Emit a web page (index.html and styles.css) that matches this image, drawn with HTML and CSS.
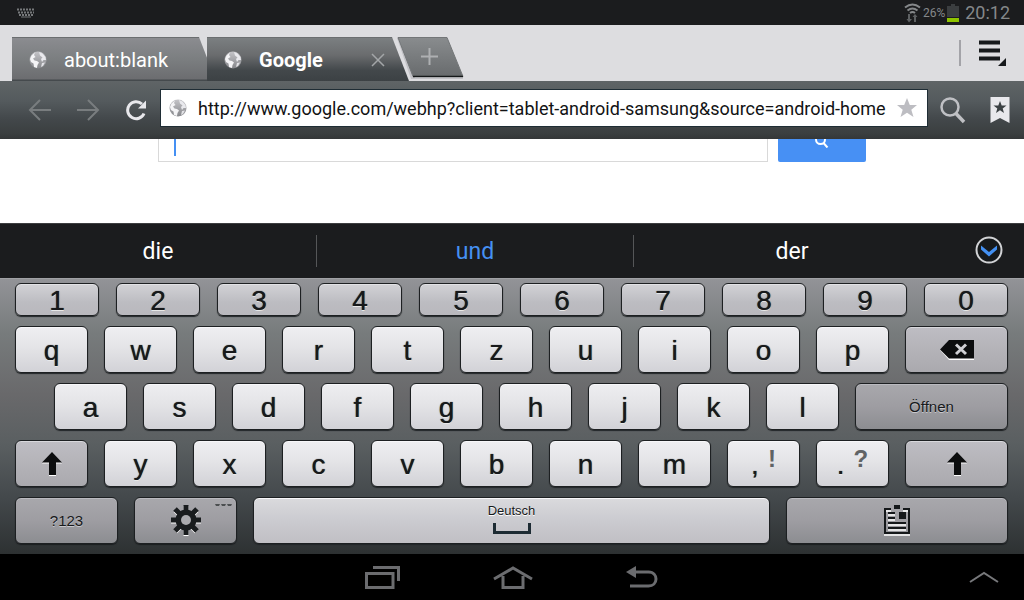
FILE: index.html
```html
<!DOCTYPE html>
<html lang="de">
<head>
<meta charset="utf-8">
<meta name="viewport" content="width=device-width, initial-scale=1">
<title>Google</title>
<link rel="stylesheet" href="styles.css">
</head>
<body>
<svg class="defs" width="0" height="0" aria-hidden="true">
  <defs>
    <linearGradient id="globe-fill" x1="0" y1="0" x2="0" y2="1">
      <stop offset="0" stop-color="#c4c4c8"/><stop offset="1" stop-color="#85868a"/>
    </linearGradient>
    <symbol id="globe" viewBox="0 0 18 18">
      <circle cx="9" cy="9" r="8.500" fill="url(#globe-fill)"/>
      <path d="M1 8 2.500 4.500 6 1.500 5 4 6.500 6 4 7.500 5.500 9.500 8 10 10 11.500 8.500 14 8 17 5 16 4.500 12.500 2 11Z" fill="#f4f4f6"/>
      <path d="M10 1 13.500 2.500 16.500 6 17 9 14.500 9 13 11 12 8 13.500 6.500 11 4.500Z" fill="#e9e9ed"/>
      <path d="M13 12 16 11.500 14 15 12 16Z" fill="#e2e2e6"/>
    </symbol>
    <symbol id="shift" viewBox="0 0 20 26">
      <path d="M10 2 20 12.500H14V25H7V12.500H0Z" fill="#fff"/>
      <path d="M10 1 20 11.500H14V24H7V11.500H0Z" fill="#0c0d0e"/>
    </symbol>
  </defs>
</svg>

<header class="status">
  <svg class="status-keyboard" width="18" height="10" viewBox="0 0 18 10" role="img" aria-label="Tastatur">
    <path d="M0 1.500H18M1 4.500H17M2 7H16" stroke="#77797b" stroke-width="2" stroke-dasharray="2 1"/>
    <path d="M4 9H14" stroke="#77797b" stroke-width="1"/>
  </svg>
  <div class="status-right">
    <svg width="17" height="20" viewBox="0 0 17 20" role="img" aria-label="WLAN">
      <g fill="none" stroke="#85888a" stroke-width="2">
        <path d="M1 4.500Q8.500-1.500 16 4.500"/><path d="M3.500 7.500Q8.500 3.500 13.500 7.500"/><path d="M6 10Q8.500 8 11 10"/>
      </g>
      <path d="M6 11V16H8L5 19.500 2.500 16H4V11ZM10 19V14H8.500L11 11 13.500 14H12V19Z" fill="#5e6163"/>
    </svg>
    <span class="percent">26%</span>
    <svg width="12" height="18" viewBox="0 0 12 18" role="img" aria-label="Akku">
      <path d="M4 0H8V2H12V13H0V2H4Z" fill="#3b3e40"/><path d="M0 14H12V18H0Z" fill="#8fc400"/>
    </svg>
    <time class="clock">20:12</time>
  </div>
</header>

<nav class="tabs" aria-label="Tabs">
  <button class="tab" type="button">
    <svg width="18" height="18" aria-hidden="true"><use href="#globe"/></svg><span>about:blank</span>
  </button>
  <div class="tab tab-active">
    <svg width="18" height="18" aria-hidden="true"><use href="#globe"/></svg><span class="tab-title">Google</span>
    <button class="tab-close" type="button" aria-label="Tab schließen">
      <svg width="14" height="14" viewBox="0 0 14 14"><path d="M1 1 13 13M13 1 1 13" stroke="#a3a6a8" stroke-width="1.500"/></svg>
    </button>
  </div>
  <button class="tab-new" type="button" aria-label="Neuer Tab">
    <svg width="68" height="42" viewBox="0 0 68 42">
      <defs><linearGradient id="new-fill" x1="0" y1="0" x2="0" y2="1"><stop offset="0" stop-color="#898c8e"/><stop offset="1" stop-color="#686b6d"/></linearGradient></defs>
      <path d="M0 1H3L18 41H66V42H14Z" fill="#c2c2c6"/>
      <path d="M1 .5H50L66 39.500H16Z" fill="url(#new-fill)" stroke="#737678"/>
      <path d="M16 39.500H66" stroke="#151819" stroke-width="1.500"/>
      <path d="M32.500 11V28M24 19.500H41" stroke="#aeb0b2" stroke-width="2"/>
    </svg>
  </button>
  <button class="menu" type="button" aria-label="Menü">
    <svg width="28" height="27" viewBox="0 0 28 27"><path d="M0 2.500H21M0 10.500H21M0 18.500H21" stroke="#16191b" stroke-width="4"/><path d="M27 18V26H19Z" fill="#16191b"/></svg>
  </button>
</nav>

<div class="toolbar">
  <button class="icon" type="button" aria-label="Zurück">
    <svg width="24" height="22" viewBox="0 0 24 22"><path d="M12 1 2 11 12 21M2 11H23" fill="none" stroke="#797d7f" stroke-width="2"/></svg>
  </button>
  <button class="icon" type="button" aria-label="Vorwärts">
    <svg width="24" height="22" viewBox="0 0 24 22"><path d="M12 1 22 11 12 21M22 11H1" fill="none" stroke="#797d7f" stroke-width="2"/></svg>
  </button>
  <button class="icon" type="button" aria-label="Neu laden">
    <svg width="24" height="22" viewBox="-2 0 24 22"><path d="M16 5A8.500 8.500 0 1 0 18 14.500" fill="none" stroke="#e8e8ec" stroke-width="3"/><path d="M20 1.500V9.500H12Z" fill="#e8e8ec"/></svg>
  </button>
  <form class="address">
    <svg width="18" height="18" aria-hidden="true"><use href="#globe"/></svg>
    <input class="url" type="text" aria-label="Adresse" value="http://www.google.com/webhp?client=tablet-android-samsung&amp;source=android-home">
    <button class="star" type="button" aria-label="Favorit">
      <svg width="20" height="20" viewBox="0 0 20 20"><path d="M10 0 12.800 7H20L14.300 11.700 16.500 19 10 14.800 3.500 19 5.700 11.700 0 7H7.200Z" fill="#bdbdc2"/></svg>
    </button>
  </form>
  <button class="icon find" type="button" aria-label="Suchen">
    <svg width="26" height="27" viewBox="0 0 26 27"><circle cx="10" cy="10" r="8.500" fill="none" stroke="#bfc0c4" stroke-width="2.500"/><path d="M15.500 16 24 25" stroke="#bfc0c4" stroke-width="3.500"/></svg>
  </button>
  <button class="icon" type="button" aria-label="Lesezeichen">
    <svg width="20" height="28" viewBox="0 0 20 28"><path d="M.5 1H19.500V27L10 22 .5 27Z" fill="#e8e8ec"/><path d="M10 5 11.700 9.500H16.500L12.700 12.500 14 17 10 14.300 6 17 7.300 12.500 3.500 9.500H8.300Z" fill="#3b4144"/></svg>
  </button>
</div>

<main class="page">
  <form class="search">
    <input class="search-box" type="text" aria-label="Google-Suche">
    <button class="search-go" type="button" aria-label="Google-Suche starten">
      <svg width="14" height="16" viewBox="0 0 14 16"><circle cx="5.500" cy="7.500" r="4.500" fill="none" stroke="#fff" stroke-width="2"/><path d="M8.500 11 12.500 15.500" stroke="#fff" stroke-width="2"/></svg>
    </button>
  </form>
</main>

<section class="suggestions" aria-label="Vorschläge">
  <button class="word" type="button">die</button>
  <button class="word word-best" type="button">und</button>
  <button class="word" type="button">der</button>
  <button class="expand" type="button" aria-label="Mehr">
    <svg width="28" height="28" viewBox="0 0 28 28"><circle cx="14" cy="14" r="12.500" fill="#16191b" stroke="#d2d3d6" stroke-width="2"/><path d="M6 9.500 14 16 22 9.500V13.500L14 20.500 6 13.500Z" fill="#4390f2"/></svg>
  </button>
</section>

<section class="keyboard" aria-label="Bildschirmtastatur">
  <div class="row row-numbers">
    <button class="key">1</button><button class="key">2</button><button class="key">3</button><button class="key">4</button><button class="key">5</button><button class="key">6</button><button class="key">7</button><button class="key">8</button><button class="key">9</button><button class="key">0</button>
  </div>
  <div class="row">
    <button class="key">q</button><button class="key">w</button><button class="key">e</button><button class="key">r</button><button class="key">t</button><button class="key">z</button><button class="key">u</button><button class="key">i</button><button class="key">o</button><button class="key">p</button>
    <button class="key key-mid key-wide" aria-label="Löschen">
      <svg width="34" height="20" viewBox="0 0 34 20"><path d="M0 10 10 1H34V20H9Z" fill="#fff"/><path d="M0 9.500 9 0H34V18.500H9Z" fill="#0c0d0e"/><path d="M16 4.500 26 14M26 4.500 16 14" stroke="#cfcfd3" stroke-width="3"/></svg>
    </button>
  </div>
  <div class="row row-home">
    <button class="key">a</button><button class="key">s</button><button class="key">d</button><button class="key">f</button><button class="key">g</button><button class="key">h</button><button class="key">j</button><button class="key">k</button><button class="key">l</button>
    <button class="key key-dark key-open">Öffnen</button>
  </div>
  <div class="row">
    <button class="key key-mid" aria-label="Umschalt links"><svg width="20" height="26"><use href="#shift"/></svg></button>
    <button class="key">y</button><button class="key">x</button><button class="key">c</button><button class="key">v</button><button class="key">b</button><button class="key">n</button><button class="key">m</button>
    <button class="key key-pair"><span>,</span><span class="alt">!</span></button>
    <button class="key key-pair"><span>.</span><span class="alt">?</span></button>
    <button class="key key-mid key-wide" aria-label="Umschalt rechts"><svg width="20" height="26"><use href="#shift"/></svg></button>
  </div>
  <div class="row">
    <button class="key key-dark key-wide">?123</button>
    <button class="key key-dark key-wide key-gear" aria-label="Einstellungen">
      <svg width="30" height="31" viewBox="-15 -15 30 31">
        <g stroke="#fff" stroke-width="5" transform="translate(0 1)"><path d="M0-15V15M-15 0H15M-10.500-10.500 10.500 10.500M10.500-10.500-10.500 10.500"/></g>
        <g stroke="#191c1e" stroke-width="5"><path d="M0-15V15M-15 0H15M-11-11 11 11M11-11-11 11"/></g>
        <circle r="10.500" fill="#191c1e"/><circle r="5" fill="#aaaaae"/>
      </svg>
      <svg class="more" width="18" height="4" viewBox="0 0 18 4"><path d="M0 1H5L4 3H1ZM6 1H11L10 3H7ZM12 1H17L16 3H13Z" fill="#4c4f51"/></svg>
    </button>
    <button class="key key-space">
      <span>Deutsch</span>
      <svg width="38" height="11" viewBox="0 0 38 11"><path d="M1.500 0V9.500H36.500V0" fill="none" stroke="#1d2b33" stroke-width="3"/></svg>
    </button>
    <button class="key key-dark key-clip" aria-label="Zwischenablage">
      <svg width="26" height="31" viewBox="0 0 26 31">
        <path d="M0 30H26M4 10H11M4 15H11M4 20H22M4 25H22M2 6H7M19 6H24" stroke="#fff" stroke-width="1.500"/>
        <path d="M7 4H1V28H25V4H19" fill="none" stroke="#15181a" stroke-width="2"/>
        <path d="M10 0H16V4H10Z" fill="#15181a"/>
        <path d="M4 8H11M4 13H11M4 18H22M4 23H22" stroke="#15181a" stroke-width="2"/>
        <path d="M15 7H22V14H15Z" fill="#15181a"/>
      </svg>
    </button>
  </div>
</section>

<footer class="system">
  <div class="system-main">
    <button class="sys" type="button" aria-label="Letzte Apps">
      <svg width="36" height="24" viewBox="0 0 36 24"><path d="M2.500 8.500H29V22.500H2.500ZM9 2.500H34.500V16" fill="none" stroke="#6b6c6f" stroke-width="3"/></svg>
    </button>
    <button class="sys" type="button" aria-label="Startseite">
      <svg width="40" height="24" viewBox="0 0 40 24"><path d="M1 14 20 3 39 14M10 11V22.500H30V11" fill="none" stroke="#6b6c6f" stroke-width="3"/></svg>
    </button>
    <button class="sys" type="button" aria-label="Zurück (System)">
      <svg width="32" height="22" viewBox="0 0 32 22"><path d="M8 6H22.500C28 6 30 10 30 13C30 17 27 20 22.500 20H4" fill="none" stroke="#6b6c6f" stroke-width="3"/><path d="M0 6 10 0V12Z" fill="#6b6c6f"/></svg>
    </button>
  </div>
  <button class="sys-up" type="button" aria-label="Leiste öffnen">
    <svg width="30" height="13" viewBox="0 0 30 13"><path d="M1 11 15 2 29 11" fill="none" stroke="#77787b" stroke-width="2"/></svg>
  </button>
</footer>
</body>
</html>
```

FILE: styles.css
```css
* {
  box-sizing: border-box;
}

body {
  display: flex;
  flex-direction: column;
  min-height: 100vh;
  margin: 0;
  background: #fff;
  font-family: Roboto, "Noto Sans", sans-serif;
}

button,
input {
  margin: 0;
  padding: 0;
  border: 0;
  background: none;
  color: inherit;
  font: inherit;
}

svg {
  display: block;
  flex: none;
}

.defs {
  position: absolute;
}

/* Status bar */
.status {
  display: flex;
  align-items: center;
  justify-content: space-between;
  height: 25px;
  padding: 0 14px 0 17px;
  background: #1b1c1e;
  color: #85888a;
}

.status-right {
  display: flex;
  align-items: center;
  gap: 2px;
}

.percent {
  font-size: 12px;
}

.clock {
  margin-left: 4px;
  font-size: 18px;
}

/* Tabs */
.tabs {
  display: flex;
  align-items: flex-end;
  height: 56px;
  padding: 0 17px 0 12px;
  background: #dddde0;
}

.tab {
  display: flex;
  align-items: center;
  gap: 17px;
  width: 204px;
  height: 44px;
  padding: 0 18px 0 17px;
  border-top: 1px solid #6b6e70;
  background: linear-gradient(#8b8c90, #7b7e80 50%, #6c6d70 95%, #454a4d 98%);
  clip-path: polygon(0 0, calc(100% - 17px) 0, 100% 100%, 0 100%);
  color: #fff;
  font-size: 20px;
}

.tab-active {
  margin-left: -9px;
  width: 202px;
  background: linear-gradient(#7b7f81, #6a6c6e 40%, #43484b 75%, #3c4144);
  font-weight: 700;
}

.tab-title {
  flex: 1;
}

.tab-close {
  padding: 6px;
}

.tab-new {
  align-self: flex-end;
  margin: 0 0 2px -12px;
}

.menu {
  display: flex;
  align-items: center;
  align-self: center;
  height: 26px;
  margin-left: auto;
  padding-left: 18px;
  border-left: 2px solid #a3a3a8;
}

/* Toolbar */
.toolbar {
  display: flex;
  align-items: center;
  height: 58px;
  padding: 0 14px 0 28px;
  gap: 24px;
  background: linear-gradient(#5f6466, #545a5d 35%, #43484b 65%, #3b3f40 90%, #343738);
}

.address {
  display: flex;
  flex: 1;
  align-items: center;
  height: 38px;
  margin: 0 -12px 4px;
  padding: 0 10px 0 8px;
  border: 1px solid #1f2d35;
  background: #fff;
}

.url {
  flex: 1;
  min-width: 0;
  height: 34px;
  margin: 0 4px 0 11px;
  color: #121314;
  font-size: 18px;
}

/* Web page, scrolled so that the search form starts under the toolbar */
.page {
  flex: 1;
  min-height: 84px;
  overflow: hidden;
}

.search {
  display: flex;
  gap: 10px;
  max-width: 708px;
  margin: -22px auto 0;
}

.search-box {
  flex: 1;
  height: 45px;
  border: 1px solid #d9d9d9;
  background: linear-gradient(#4590f3, #4590f3) 15px 14px / 2px 24px no-repeat;
}

.search-go {
  display: grid;
  place-items: center;
  width: 88px;
  height: 45px;
  border-radius: 2px;
  background: #4790f4;
}

/* Suggestions */
.suggestions {
  display: flex;
  align-items: center;
  height: 55px;
  border-top: 1px solid #3d3e40;
  background: #1b1c1e;
  color: #fff;
  font-size: 23px;
}

.word {
  flex: 1;
  height: 32px;
  border-right: 1px solid #555658;
}

.word:nth-child(3) {
  border-color: transparent;
}

.word-best {
  color: #4690f2;
}

.expand {
  display: grid;
  place-items: center;
  width: 73px;
  padding: 0 0 2px 3px;
}

/* Keyboard */
.keyboard {
  display: flex;
  flex-direction: column;
  gap: 10px;
  padding: 4px 16px 10px 15px;
  border-top: 1px solid #a0a1a5;
  background: linear-gradient(#929397, #777b7c 20%, #69696b 42%, #5a5f61 60%, #43484b 80%, #2d3132);
  font-family: "Liberation Sans", Arial, sans-serif;
}

.row {
  display: flex;
  gap: 16px;
  height: 47px;
}

.row-numbers {
  gap: 17px;
  height: 33px;
}

.row-home {
  padding-left: 39px;
}

.key {
  display: flex;
  flex: 73 73 73px;
  align-items: center;
  justify-content: center;
  min-width: 0;
  padding-top: 3px;
  border: 1px solid #1d2022;
  border-radius: 6px;
  background: linear-gradient(#eeeef1, #e4e4e7 45%, #d2d2d7);
  box-shadow: inset 0 1px #f7f7f9, 0 1px 1px #222628;
  color: #17191b;
  font-size: 28px;
  line-height: 32px;
  text-shadow: 0 0 1px #17191b, 0 1px #fff;
}

.row-numbers .key {
  background: linear-gradient(#d2d2d6, #bcbcc1 60%, #b9b8bd);
  box-shadow: inset 0 1px #e2e2e5, 0 1px 1px #222628;
}

.key-mid,
.key-dark {
  padding: 0;
  background: linear-gradient(#bebdc3, #b2b1b6 60%, #aaa9ae);
  box-shadow: inset 0 1px #d8d8dc, 0 1px 1px #222628;
}

.key-dark {
  background: linear-gradient(#a8a8ac, #9e9da2 50%, #8c8d91);
  box-shadow: inset 0 1px #bbbbc0, 0 1px 1px #1b1e20;
  font-size: 15px;
  text-shadow: 0 1px #c8c8cc;
}

.key-wide {
  flex: 103 103 103px;
}

.key-open {
  flex: 153 153 153px;
}

.key-pair {
  gap: 9px;
}

.alt {
  padding-bottom: 12px;
  color: #606365;
  font-size: 24px;
  font-weight: 700;
  text-shadow: none;
}

.key-gear {
  position: relative;
}

.more {
  position: absolute;
  top: 5px;
  right: 3px;
}

.key-space {
  flex: 517 517 517px;
  flex-direction: column;
  gap: 4px;
  padding: 0 0 4px;
  background: linear-gradient(#dadadd, #cbcbd0 50%, #c0bfc4);
  font-size: 13px;
  line-height: 16px;
  text-shadow: 0 1px #fff;
}

.key-clip {
  flex: 222 222 222px;
}

/* System bar */
.system {
  display: flex;
  align-items: center;
  height: 46px;
  padding: 0 25px 0 364px;
  background: #000;
}

.system-main {
  display: flex;
  flex: 1;
  align-items: center;
  gap: 93px;
}
```
